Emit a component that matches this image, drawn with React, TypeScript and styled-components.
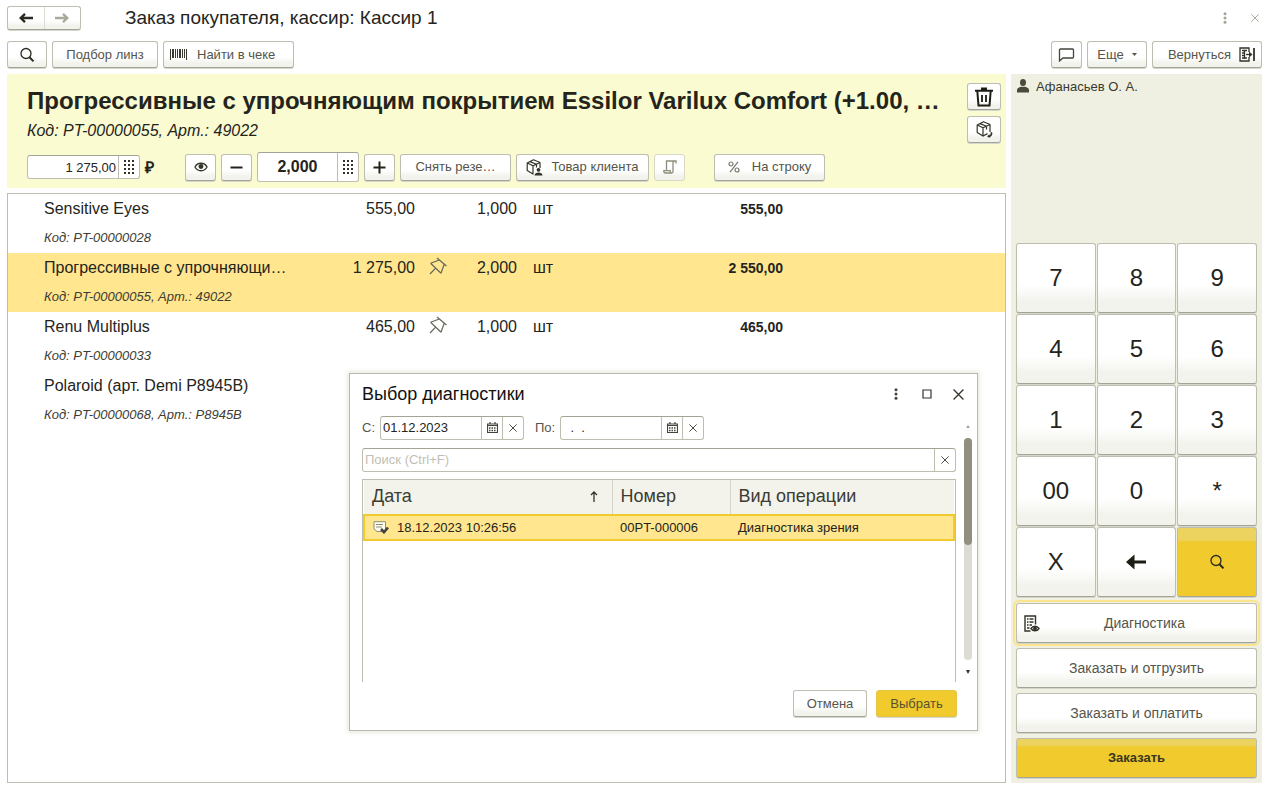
import React from 'react';
import styled, { createGlobalStyle, css } from 'styled-components';

const ink = '#24241c';
const soft = '#55554a';
const line = '#bdbdb0';
const lineDark = '#a3a396';
const gold = '#f1ca2e';
const goldSoft = '#ffe68f';

const GlobalStyle = createGlobalStyle`
  * { box-sizing: border-box; }
  body { margin: 0; background: #fff; }
  body, button, input, table { font-family: "Liberation Sans", Arial, sans-serif; color: ${ink}; }
  h1, h2, p { margin: 0; font-weight: 400; }
`;

const Page = styled.div`
  min-height: 100vh;
  display: flex;
  flex-direction: column;
  padding: 5px 11px 6px 7px;
`;

const TitleBar = styled.header`
  display: flex;
  align-items: center;
  height: 25px;
`;

const raised = css`
  background: linear-gradient(#fff 0%, #fff 60%, #f3f3ed 85%, #f3f3ed 100%);
  border: 1px solid ${line};
  border-bottom-color: ${lineDark};
  border-radius: 3px;
  box-shadow: 0 1px 0 #d6d6cc;
`;

const NavGroup = styled.nav`
  ${raised}
  display: flex;
  width: 74px;
  height: 24px;
`;

const NavButton = styled.button`
  flex: 1;
  display: flex;
  align-items: center;
  justify-content: center;
  padding: 0;
  border: 0;
  background: none;
  & + & { border-left: 1px solid #dcdcd2; }
`;

const PageTitle = styled.h1`
  flex: 1;
  margin-left: 44px;
  font-size: 19px;
  line-height: 24px;
`;

const WindowTools = styled.div<{ $gap: number }>`
  display: flex;
  align-items: center;
  gap: ${p => p.$gap}px;
`;

const IconButton = styled.button`
  display: flex;
  align-items: center;
  justify-content: center;
  width: 14px;
  height: 16px;
  padding: 0;
  border: 0;
  background: none;
`;

const Toolbar = styled.div`
  display: flex;
  align-items: center;
  gap: 5px;
  margin-top: 11px;
`;

const Spacer = styled.div`
  flex: 1;
`;

type ButtonProps = { $w?: number; $primary?: boolean; $faded?: boolean; $align?: string; $gap?: number };
const Button = styled.button<ButtonProps>`
  ${raised}
  display: flex;
  align-items: center;
  justify-content: ${p => p.$align || 'center'};
  gap: ${p => p.$gap || 8}px;
  flex: none;
  width: ${p => p.$w || 31}px;
  height: 27px;
  padding: 0 6px;
  font-size: 13px;
  line-height: 16px;
  white-space: nowrap;
  color: ${soft};
  ${p => p.$primary && css`background: ${gold}; border-color: #e6c545; color: #57532f;`}
  ${p => p.$faded && css`border-color: #d8d8c4; box-shadow: none;`}
`;

const Body = styled.div`
  flex: 1;
  display: flex;
  gap: 5px;
  margin-top: 6px;
`;

const Workspace = styled.main`
  position: relative;
  flex: 1;
  min-width: 0;
  display: flex;
  flex-direction: column;
  gap: 5px;
`;

const ItemCard = styled.section`
  display: flex;
  gap: 12px;
  height: 114px;
  padding: 9px 5px 5px 20px;
  background: #fafbd1;
`;

const ItemInfo = styled.div`
  flex: 1;
  min-width: 0;
`;

const ItemTitle = styled.h2`
  font-size: 24px;
  line-height: 36px;
  font-weight: 700;
  white-space: nowrap;
  overflow: hidden;
  text-overflow: ellipsis;
`;

const ItemCode = styled.p`
  font-size: 16px;
  line-height: 24px;
  font-style: italic;
`;

const ItemControls = styled.div`
  display: flex;
  align-items: center;
  gap: 5px;
  height: 30px;
  margin-top: 9px;
`;

const SideButtons = styled.div`
  display: flex;
  flex-direction: column;
  gap: 6px;
`;

const Currency = styled.span`
  width: 35px;
  font-size: 16px;
  font-weight: 700;
`;

const Gap = styled.div`
  width: 19px;
`;

const Field = styled.div<{ $w?: number; $h?: number }>`
  display: flex;
  ${p => (p.$w ? `width: ${p.$w}px;` : '')}
  height: ${p => p.$h || 24}px;
  border: 1px solid ${line};
  border-top-color: ${lineDark};
  border-radius: 3px;
  background: #fff;
`;

const Input = styled.input<{ $big?: boolean; $right?: boolean }>`
  flex: 1;
  min-width: 0;
  width: 0;
  padding: 0 2px;
  border: 0;
  outline: 0;
  background: none;
  font-size: ${p => (p.$big ? 16 : 13)}px;
  font-weight: ${p => (p.$big ? 700 : 400)};
  text-align: ${p => (p.$big ? 'center' : p.$right ? 'right' : 'left')};
  &::placeholder { color: #bfbfb5; opacity: 1; }
`;

const FieldButton = styled.button`
  display: flex;
  align-items: center;
  justify-content: center;
  width: 21px;
  padding: 0;
  border: 0;
  border-left: 1px solid ${line};
  background: none;
`;

const Items = styled.section`
  flex: 1;
  border: 1px solid ${line};
`;

const ItemTable = styled.table`
  width: 100%;
  table-layout: fixed;
  border-collapse: collapse;
`;

const ItemRow = styled.tr<{ $selected?: boolean }>`
  height: 59px;
  vertical-align: top;
  background: ${p => (p.$selected ? goldSoft : 'transparent')};
`;

const Cell = styled.td<{ $right?: boolean; $bold?: boolean }>`
  padding: 4px 0 0;
  font-size: ${p => (p.$bold ? 14 : 16)}px;
  line-height: 22px;
  font-weight: ${p => (p.$bold ? 700 : 400)};
  text-align: ${p => (p.$right ? 'right' : 'left')};
`;

const NameCell = styled(Cell)`
  padding-left: 36px;
  white-space: nowrap;
`;

const Code = styled.div`
  margin-top: 9px;
  font-size: 13px;
  line-height: 18px;
  font-style: italic;
  color: #3d3d34;
`;

const PinCell = styled(Cell)`
  padding-left: 14px;
`;

const UnitCell = styled(Cell)`
  padding-left: 16px;
`;

const Side = styled.aside`
  flex: none;
  width: 251px;
  display: flex;
  flex-direction: column;
  padding: 5px;
  background: #efefe2;
`;

const Customer = styled.p`
  display: flex;
  align-items: flex-start;
  gap: 6px;
  flex: 1;
  font-size: 13px;
  line-height: 16px;
  color: #3a3a30;
`;

const Keypad = styled.div`
  display: grid;
  grid-template-columns: repeat(3, 1fr);
  grid-auto-rows: 70px;
  gap: 1px;
`;

const Key = styled.button<{ $gold?: boolean }>`
  ${raised}
  display: flex;
  align-items: center;
  justify-content: center;
  padding: 0;
  font-size: 24px;
  line-height: 28px;
  ${p => p.$gold && css`background: linear-gradient(#ecd35f 0, #ecd35f 12px, ${gold} 14px);`}
`;

const Actions = styled.div`
  display: flex;
  flex-direction: column;
  gap: 5px;
  margin-top: 6px;
`;

const Action = styled.button<{ $gold?: boolean; $focused?: boolean }>`
  ${raised}
  display: flex;
  align-items: center;
  height: 40px;
  padding: 0 7px;
  font-size: 14px;
  line-height: 18px;
  color: ${soft};
  span { flex: 1; text-align: center; }
  ${p => p.$focused && css`outline: 2px solid #fae48d; outline-offset: 1px;`}
  ${p => p.$gold && css`
    background: linear-gradient(#ecd35f 0, #ecd35f 6px, ${gold} 8px);
    font-size: 13px;
    font-weight: 700;
    color: #3a3720;
  `}
`;

const Dialog = styled.section`
  position: absolute;
  right: 28px;
  bottom: 52px;
  width: 629px;
  height: 358px;
  display: flex;
  flex-direction: column;
  padding: 8px 5px 13px 12px;
  border: 1px solid #b9b9ac;
  background: #fff;
  box-shadow: 0 0 4px 2px #ecece4;
`;

const DialogHead = styled.div`
  display: flex;
  align-items: center;
  justify-content: space-between;
  height: 25px;
  padding-right: 7px;
`;

const DialogTitle = styled.h2`
  font-size: 18px;
  line-height: 24px;
  color: #111;
`;

const DialogMain = styled.div`
  display: flex;
  gap: 7px;
  height: 276px;
`;

const DialogContent = styled.div`
  flex: 1;
  display: flex;
  flex-direction: column;
  padding-top: 9px;
`;

const Filters = styled.div`
  display: flex;
  align-items: center;
  gap: 5px;
  margin-bottom: 8px;
`;

const Label = styled.label`
  font-size: 13px;
  color: ${soft};
  &:not(:first-child) { margin-left: 6px; }
`;

const Grid = styled.div`
  flex: 1;
  margin-top: 7px;
  border: 1px solid ${line};
  border-bottom: 0;
`;

const DataTable = styled.table`
  width: 100%;
  table-layout: fixed;
  border-collapse: collapse;
  th {
    height: 35px;
    padding: 0 8px;
    background: #f3f3ec;
    font-size: 18px;
    font-weight: 400;
    text-align: left;
    color: #3c3c32;
  }
  th + th { border-left: 1px solid #d3d3c8; }
  td {
    height: 25px;
    padding: 0 8px;
    border: solid ${gold};
    border-width: 2px 0;
    background: ${goldSoft};
    font-size: 13px;
  }
  td:first-child { border-left-width: 2px; }
  td:last-child { border-right-width: 2px; }
`;

const Spread = styled.span<{ $start?: boolean }>`
  display: flex;
  align-items: center;
  justify-content: ${p => (p.$start ? 'flex-start' : 'space-between')};
  gap: 8px;
`;

const Scroll = styled.div`
  display: flex;
  flex-direction: column;
  align-items: center;
  justify-content: space-between;
  width: 9px;
  padding: 18px 0 8px;
`;

const Track = styled.div`
  width: 8px;
  height: 222px;
  border-radius: 4px;
  background: #dcdcd4;
`;

const Thumb = styled.div`
  height: 107px;
  border-radius: 4px;
  background: #908f80;
`;

const DialogFoot = styled.div`
  display: flex;
  justify-content: flex-end;
  gap: 9px;
  margin-top: 8px;
  padding-right: 15px;
`;

const Arrow = ({ color = '#2b2b22', flip = false }) => (
  <svg width="14" height="10" viewBox="0 0 14 10" fill="none" stroke={color} strokeWidth="2.4">
    {flip ? <path d="M0 5h12M8 .9 12.300 5 8 9.100" /> : <path d="M14 5H2M6 .9 1.700 5 6 9.100" />}
  </svg>
);

const Magnifier = () => (
  <svg width="16" height="16" viewBox="0 0 16 16" fill="none" stroke="#2b2b22">
    <circle cx="7" cy="6.500" r="5" strokeWidth="1.300" />
    <path d="m10.500 10.200 4 4.200" strokeWidth="2" />
  </svg>
);

const Dots = ({ color }: { color: string }) => (
  <svg width="4" height="12" viewBox="0 0 4 12" fill={color}>
    <circle cx="2" cy="1.800" r="1.500" /><circle cx="2" cy="6" r="1.500" /><circle cx="2" cy="10.200" r="1.500" />
  </svg>
);

const Cross = ({ size = 8, color = '#44443a' }) => (
  <svg width={size} height={size} viewBox="0 0 10 10" fill="none" stroke={color} strokeWidth="1.200">
    <path d="M.5.5l9 9M9.5.5l-9 9" />
  </svg>
);

const DotPad = () => (
  <svg width="12" height="16" viewBox="0 0 12 16" fill="#33332a">
    {[0, 4, 8, 12].map(y => [0, 4, 8].map(x => <rect key={`${x}-${y}`} x={x + 1} y={y + 1} width="2" height="2" />))}
  </svg>
);

const Barcode = () => (
  <svg width="17" height="11" viewBox="0 0 17 11" fill="#3a3a30">
    <path d="M0 0h1v11H0zM2 0h2v9H2zM5 0h1v9H5zM7 0h1v9H7zM9 0h2v9H9zM12 0h1v9h-1zM14 0h1v9h-1zM16 0h1v11h-1z" />
  </svg>
);

const Bubble = () => (
  <svg width="17" height="14" viewBox="0 0 17 14" fill="none" stroke="#44443a" strokeWidth="1.300">
    <path d="M2.500 1h12a1 1 0 0 1 1 1v7a1 1 0 0 1-1 1H5l-3.500 3V2a1 1 0 0 1 1-1z" />
  </svg>
);

const Door = () => (
  <svg width="16" height="15" viewBox="0 0 16 15" fill="none" stroke="#33332a" strokeWidth="1.300">
    <path d="M10 5V1H1v13h9v-4M3 3.500h5M3 6h3M3 8.500h3M3 11h5M5.500 4v8" />
    <path d="M7 7.500h4" />
    <path d="M10 4.500 13.500 7.500 10 10.500z" fill="#33332a" stroke="none" />
    <path d="M15 1v13" strokeWidth="1.800" />
  </svg>
);

const Trash = () => (
  <svg width="20" height="20" viewBox="0 0 20 20" fill="none" stroke="#1d1d15" strokeWidth="2">
    <path d="M1 3.700h18M3.300 4l1.200 14.500h11L16.700 4" />
    <path d="M7 2h6" strokeWidth="3" />
    <path d="M8 8v7M12 8v7" strokeWidth="1.800" />
  </svg>
);

const Box = ({ person = false }) => (
  <svg width="17" height="17" viewBox="0 0 17 17" fill="none" stroke="#33332a" strokeWidth="1.200" strokeLinejoin="round">
    <path d="M1.200 4 7.500.8 14 3.500 7 6.800zM1.200 4v7.500L7 15V6.800M14 3.500V9M4 2.600l6.500 2.600v3.300" />
    {person ? (
      <>
        <circle cx="12.500" cy="10.800" r="1.900" fill="#33332a" stroke="none" />
        <path d="M8.500 16.500c0-4 8-4 8 0z" fill="#33332a" stroke="none" />
      </>
    ) : (
      <>
        <path d="M7 15l4.500-2.400M14 9v2" />
        <path d="M15.300 11.300c.8 2.300-.6 4-3.300 4.200" strokeWidth="1.700" />
        <path d="M13.500 13.200 11 15.400l2.800 1.400z" fill="#33332a" stroke="none" />
      </>
    )}
  </svg>
);

const Eye = () => (
  <svg width="14" height="10" viewBox="0 0 14 10" fill="none" stroke="#33332a" strokeWidth="1.300">
    <path d="M1 5c2.500-5 9.500-5 12 0-2.500 5-9.500 5-12 0z" />
    <circle cx="7" cy="4.500" r="1.800" fill="#33332a" />
  </svg>
);

const Sign = ({ plus = false }) => (
  <svg width="13" height="13" viewBox="0 0 13 13" stroke="#22221a" strokeWidth="2">
    <path d={plus ? 'M.5 6.500h12M6.500.5v12' : 'M.5 6.500h12'} />
  </svg>
);

const Scroller = () => (
  <svg width="14" height="14" viewBox="0 0 14 14" fill="none" stroke="#8d8d7c" strokeWidth="1.300">
    <path d="M3.500 10.500V1H13v2.500M13 1h-1.500c-1 0-1.500.6-1.500 1.500V11.500c0 .9-.6 1.500-1.500 1.500H2.500C1.300 13 .8 12 .8 10.700h6.400c0 1.300.4 2.300 1.300 2.300" />
  </svg>
);

const Percent = () => (
  <svg width="12" height="12" viewBox="0 0 12 12" fill="none" stroke="#77776a" strokeWidth="1.200">
    <circle cx="3" cy="3" r="2" /><circle cx="9" cy="9" r="2" /><path d="M10 .8 2 11.200" />
  </svg>
);

const Pin = () => (
  <svg width="18" height="18" viewBox="0 0 18 18" fill="none" stroke="#66665a" strokeWidth="1.200">
    <path d="M8 1l9.500 8M1.600 6.200 12 16.200M1.600 6.200 10.300 3M12 16.200l3.200-9M6.600 11.200 1 17" />
  </svg>
);

const Person = () => (
  <svg width="14" height="14" viewBox="0 0 14 14" fill="#4a4a3c">
    <ellipse cx="7" cy="3.600" rx="3" ry="3.500" />
    <path d="M1 13.500v-2.500c0-2 3-3 4.500-3.200h3C10 8 13 9 13 11v2.500z" />
  </svg>
);

const Calendar = () => (
  <svg width="11" height="11" viewBox="0 0 11 11" fill="none" stroke="#44443a">
    <path d="M.5 2h10v8.500H.5zM.5 3.500h10M3 0v2.500M8 0v2.500" strokeWidth="1.200" />
    <path d="M2 6h7M2 8.500h7" strokeDasharray="1.500 1" strokeWidth="1.300" />
  </svg>
);

const Report = () => (
  <svg width="16" height="17" viewBox="0 0 16 17" fill="none" stroke="#33332a" strokeWidth="1.400">
    <path d="M11.500 9.500V1H1v15h5.500M3 4h1.500M5.500 4H9.500M3 7h1.500M5.500 7H9.500M3 10h1.500M5.500 10H8M3 13h2.500" />
    <path d="M7 13.500c2-3 6-3 8 0-2 3-6 3-8 0z" />
    <circle cx="11" cy="13.500" r="1.200" fill="#33332a" />
  </svg>
);

const Doc = () => (
  <svg width="16" height="13" viewBox="0 0 16 13" fill="none">
    <path d="M1 .7h11.500v9.800H4L1 8z" fill="#fffdf0" stroke="#8d8d7c" />
    <path d="M3 3.500h7M3 6h6" stroke="#8d8d7c" />
    <path d="M8 8l3 3.200 4-4.700" stroke="#44443a" strokeWidth="2.600" />
  </svg>
);

const items = [
  { name: 'Sensitive Eyes', code: 'Код: PT-00000028', price: '555,00', qty: '1,000', unit: 'шт', total: '555,00' },
  { name: 'Прогрессивные с упрочняющи…', code: 'Код: PT-00000055, Арт.: 49022', price: '1 275,00', qty: '2,000', unit: 'шт', total: '2 550,00', pin: true, selected: true },
  { name: 'Renu Multiplus', code: 'Код: PT-00000033', price: '465,00', qty: '1,000', unit: 'шт', total: '465,00', pin: true },
  { name: 'Polaroid (арт. Demi P8945B)', code: 'Код: PT-00000068, Арт.: P8945B', price: '', qty: '', unit: '', total: '' },
];

const keys = ['7', '8', '9', '4', '5', '6', '1', '2', '3', '00', '0', '*', 'X'];

const DateField = ({ id, value }: { id: string; value: string }) => (
  <Field $w={144}>
    <Input id={id} defaultValue={value} />
    <FieldButton aria-label="Календарь"><Calendar /></FieldButton>
    <FieldButton aria-label="Очистить"><Cross /></FieldButton>
  </Field>
);

export default function App() {
  return (
    <Page>
      <GlobalStyle />
      <TitleBar>
        <NavGroup>
          <NavButton aria-label="Назад"><Arrow /></NavButton>
          <NavButton aria-label="Вперед"><Arrow flip color="#a9a99c" /></NavButton>
        </NavGroup>
        <PageTitle>Заказ покупателя, кассир: Кассир 1</PageTitle>
        <WindowTools $gap={16}>
          <IconButton aria-label="Меню"><Dots color="#a3a396" /></IconButton>
          <IconButton aria-label="Закрыть"><Cross color="#a3a396" /></IconButton>
        </WindowTools>
      </TitleBar>

      <Toolbar>
        <Button $w={40} aria-label="Поиск"><Magnifier /></Button>
        <Button $w={106}>Подбор линз</Button>
        <Button $w={131} $align="flex-start" $gap={10}><Barcode />Найти в чеке</Button>
        <Spacer />
        <Button aria-label="Комментарий"><Bubble /></Button>
        <Button $w={60}>Еще <svg width="5" height="3" viewBox="0 0 5 3"><path d="M0 0h5L2.500 3z" fill={soft} /></svg></Button>
        <Button $w={110} $align="flex-end"><span>Вернуться</span><Door /></Button>
      </Toolbar>

      <Body>
        <Workspace>
          <ItemCard>
            <ItemInfo>
              <ItemTitle>Прогрессивные с упрочняющим покрытием Essilor Varilux Comfort (+1.00, …</ItemTitle>
              <ItemCode>Код: PT-00000055, Арт.: 49022</ItemCode>
              <ItemControls>
                <Field $w={113}>
                  <Input $right aria-label="Цена" defaultValue="1 275,00" />
                  <FieldButton aria-label="Ввести цену"><DotPad /></FieldButton>
                </Field>
                <Currency>₽</Currency>
                <Button aria-label="Показать"><Eye /></Button>
                <Button aria-label="Уменьшить"><Sign /></Button>
                <Field $w={102} $h={30}>
                  <Input $big aria-label="Количество" defaultValue="2,000" />
                  <FieldButton aria-label="Ввести количество"><DotPad /></FieldButton>
                </Field>
                <Button aria-label="Увеличить"><Sign plus /></Button>
                <Button $w={111}>Снять резе…</Button>
                <Button $w={133}><Box person />Товар клиента</Button>
                <Button $faded aria-label="Чек"><Scroller /></Button>
                <Gap />
                <Button $w={111} $gap={12}><Percent />На строку</Button>
              </ItemControls>
            </ItemInfo>
            <SideButtons>
              <Button $w={34} aria-label="Удалить"><Trash /></Button>
              <Button $w={34} aria-label="Возврат товара"><Box /></Button>
            </SideButtons>
          </ItemCard>

          <Items>
            <ItemTable>
              <colgroup>
                <col width="319" /><col width="88" /><col width="54" /><col width="48" /><col width="80" /><col width="186" /><col />
              </colgroup>
              <tbody>
                {items.map(it => (
                  <ItemRow key={it.name} $selected={it.selected}>
                    <NameCell>{it.name}<Code>{it.code}</Code></NameCell>
                    <Cell $right>{it.price}</Cell>
                    <PinCell>{it.pin && <Pin />}</PinCell>
                    <Cell $right>{it.qty}</Cell>
                    <UnitCell>{it.unit}</UnitCell>
                    <Cell $right $bold>{it.total}</Cell>
                    <Cell />
                  </ItemRow>
                ))}
              </tbody>
            </ItemTable>
          </Items>

          <Dialog role="dialog" aria-labelledby="dialog-title">
            <DialogHead>
              <DialogTitle id="dialog-title">Выбор диагностики</DialogTitle>
              <WindowTools $gap={17}>
                <IconButton aria-label="Меню"><Dots color="#44443a" /></IconButton>
                <IconButton aria-label="Развернуть">
                  <svg width="10" height="10" viewBox="0 0 10 10" fill="none" stroke="#33332a" strokeWidth="1.200"><path d="M1 1h8v8H1z" /></svg>
                </IconButton>
                <IconButton aria-label="Закрыть"><Cross size={11} color="#33332a" /></IconButton>
              </WindowTools>
            </DialogHead>
            <DialogMain>
              <DialogContent>
                <Filters>
                  <Label htmlFor="from">С:</Label>
                  <DateField id="from" value="01.12.2023" />
                  <Label htmlFor="to">По:</Label>
                  <DateField id="to" value="  .  ." />
                </Filters>
                <Field>
                  <Input aria-label="Поиск" placeholder="Поиск (Ctrl+F)" />
                  <FieldButton aria-label="Очистить"><Cross /></FieldButton>
                </Field>
                <Grid>
                  <DataTable>
                    <colgroup><col width="248" /><col width="118" /><col /></colgroup>
                    <thead>
                      <tr>
                        <th>
                          <Spread>Дата
                            <svg width="18" height="12" viewBox="0 0 18 12" fill="none" stroke="#33332a" strokeWidth="1.300"><path d="M8 11V1M5 4l3-3 3 3" /></svg>
                          </Spread>
                        </th>
                        <th>Номер</th>
                        <th>Вид операции</th>
                      </tr>
                    </thead>
                    <tbody>
                      <tr>
                        <td><Spread $start><Doc />18.12.2023 10:26:56</Spread></td>
                        <td>00PT-000006</td>
                        <td>Диагностика зрения</td>
                      </tr>
                    </tbody>
                  </DataTable>
                </Grid>
              </DialogContent>
              <Scroll>
                <svg width="4" height="3" viewBox="0 0 4 3"><path d="M2 0l2 3H0z" fill="#a3a396" /></svg>
                <Track><Thumb /></Track>
                <svg width="4" height="4" viewBox="0 0 4 4"><path d="M0 0h4L2 4z" fill="#33332a" /></svg>
              </Scroll>
            </DialogMain>
            <DialogFoot>
              <Button $w={74}>Отмена</Button>
              <Button $w={81} $primary>Выбрать</Button>
            </DialogFoot>
          </Dialog>
        </Workspace>

        <Side>
          <Customer><Person />Афанасьев О. А.</Customer>
          <Keypad>
            {keys.map(k => <Key key={k}>{k}</Key>)}
            <Key aria-label="Стереть">
              <svg width="20" height="16" viewBox="0 0 20 16" fill="#1d1d15"><path d="M0 8l8.500-7.500v6H20v3H8.500v6z" /></svg>
            </Key>
            <Key $gold aria-label="Найти"><Magnifier /></Key>
          </Keypad>
          <Actions>
            <Action $focused><Report /><span>Диагностика</span></Action>
            <Action><span>Заказать и отгрузить</span></Action>
            <Action><span>Заказать и оплатить</span></Action>
            <Action $gold><span>Заказать</span></Action>
          </Actions>
        </Side>
      </Body>
    </Page>
  );
}
